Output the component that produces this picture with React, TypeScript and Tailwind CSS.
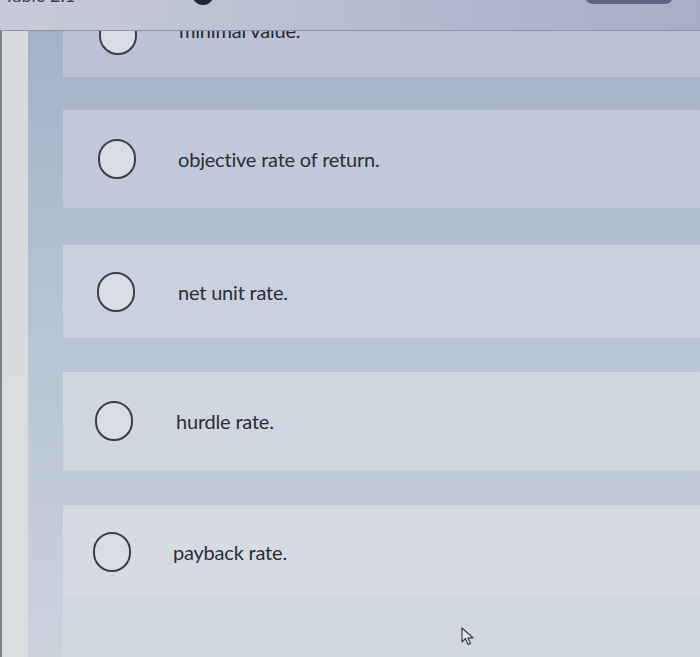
import React from "react";

type Row = {
  label: string;
  card: string;
  pad: string;
  textGap: string;
  h: string;
  mb: string;
};

const rows: Row[] = [
  { label: "objective rate of return.", card: "bg-[#c2c9da]", pad: "pl-[35px]", textGap: "ml-[42px]", h: "h-[98px]", mb: "mb-[37px]" },
  { label: "net unit rate.", card: "bg-[#cad1de]", pad: "pl-[34px]", textGap: "ml-[43px]", h: "h-[93px]", mb: "mb-[34px]" },
  { label: "hurdle rate.", card: "bg-[#d0d6df]", pad: "pl-[32px]", textGap: "ml-[43px]", h: "h-[98px]", mb: "mb-[35px]" },
  { label: "payback rate.", card: "bg-[#d5dbe1]", pad: "pl-[30px]", textGap: "ml-[42px]", h: "h-[93px]", mb: "mb-0" },
];

function Radio({ extra = "" }: { extra?: string }) {
  return (
    <div
      className={`w-[38px] h-[40px] shrink-0 rounded-full border-2 border-[#3a3f49] bg-[#d8dce3] ${extra}`}
    />
  );
}

export default function App() {
  return (
    <div
      className="relative w-[700px] h-[657px] overflow-hidden flex flex-col bg-[#cfd7de]"
      style={{ fontFamily: "Lato, 'Open Sans', 'Liberation Sans', sans-serif" }}
    >
      {/* header */}
      <div className="relative h-[31px] shrink-0 overflow-hidden border-b border-[#8a92a8] bg-linear-to-r from-[#c8ccd8] via-[#b7bdd0] to-[#a6adc7]">
        <div className="absolute left-[4px] -top-[14px] text-[18px] leading-[18px] text-[#3a3f4c]">
          Table 2.1
        </div>
        <div className="absolute left-[192px] -top-[17px] w-[22px] h-[22px] rounded-full bg-[#23262e]" />
        <div className="absolute left-[585px] -top-[20px] w-[88px] h-[24px] rounded-[8px] bg-[#5e6682]" />
      </div>

      {/* body */}
      <div className="flex flex-1 min-h-0">
        <div className="w-[28px] shrink-0 border-l-2 border-[#7d8288] bg-linear-to-b from-[#d7dadf] to-[#d9dedf]" />
        <div className="flex-1 flex flex-col pl-[35px] bg-linear-to-b from-[#a6b1c7] via-[#b9c4d4] to-[#c9d3dc]">
          {/* partially visible first card */}
          <div className="h-[46px] shrink-0 overflow-hidden bg-[#bbc2d5] mb-[33px] flex items-start pl-[36px]">
            <Radio extra="-mt-[16px]" />
            <div className="ml-[42px] -mt-[13px] text-[20px] leading-[24px] text-[#262a33] tracking-[-0.2px]">
              minimal value.
            </div>
          </div>

          {rows.map((r) => (
            <div
              key={r.label}
              className={`${r.h} ${r.mb} shrink-0 ${r.card} flex items-center ${r.pad}`}
            >
              <Radio />
              <div className={`${r.textGap} text-[20px] leading-[24px] text-[#2a2e37] tracking-[-0.2px]`}>
                {r.label}
              </div>
            </div>
          ))}

          <div className="flex-1 bg-[#d2d9de]" />
        </div>
      </div>

      {/* cursor */}
      <svg
        className="absolute left-[460px] top-[627px]"
        width="18"
        height="20"
        viewBox="0 0 18 20"
      >
        <path
          d="M2 1 L2 15 L5.5 11.5 L8 17.5 L10.5 16.5 L8 10.8 L13 10.8 Z"
          fill="#e6eaec"
          stroke="#3a3e46"
          strokeWidth="1.2"
          strokeLinejoin="round"
        />
      </svg>
    </div>
  );
}
